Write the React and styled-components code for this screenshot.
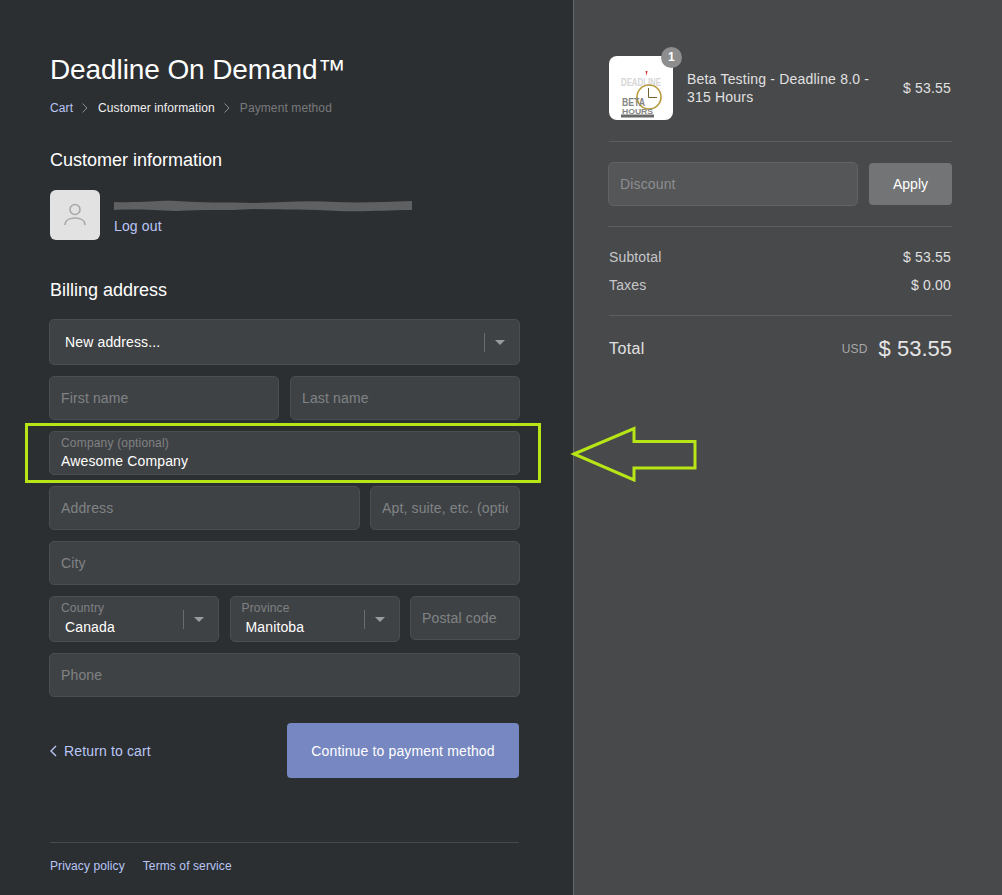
import React from "react";
import styled, { createGlobalStyle } from "styled-components";

const GlobalStyle = createGlobalStyle`
  html, body {
    margin: 0;
    padding: 0;
    background: #48494b;
  }
  * {
    box-sizing: border-box;
  }
`;

const Page = styled.div`
  display: grid;
  grid-template-columns: 574px 1fr;
  min-height: 895px;
  font-family: "Liberation Sans", Arial, sans-serif;
  font-size: 14px;
  letter-spacing: 0.14px;
  color: #fff;
`;

const Main = styled.main`
  background: #2c2f32;
  border-right: 1px solid #68696b;
  padding: 51px 53px 0 49px;
  display: flex;
  flex-direction: column;
`;

const Title = styled.h1`
  margin: 0 0 0 1px;
  font-size: 28px;
  line-height: 38px;
  font-weight: 400;
  letter-spacing: -0.1px;
`;

const Breadcrumb = styled.nav`
  display: flex;
  align-items: center;
  margin: 11px 0 0 1px;
  font-size: 12px;
  line-height: 16px;
  letter-spacing: 0.1px;
`;

const Crumb = styled.span`
  color: ${(props) => props.color || "#fff"};
`;

const CrumbIcon = styled.svg`
  width: 6px;
  height: 10px;
  margin: 0 10px 0 9px;
  fill: none;
  stroke: #8b8c8e;
  stroke-width: 1;
`;

const SectionTitle = styled.h2`
  margin: ${(props) => props.$top} 0 0 1px;
  font-size: 18px;
  line-height: 24px;
  font-weight: 400;
  letter-spacing: 0;
`;

const Account = styled.div`
  display: flex;
  gap: 14px;
  margin: 18px 0 0 1px;
`;

const Avatar = styled.div`
  width: 50px;
  height: 50px;
  border-radius: 6px;
  background: #e2e2e2;
  display: flex;
  align-items: center;
  justify-content: center;
`;

const AccountText = styled.div`
  display: flex;
  flex-direction: column;
`;

const Smudge = styled.svg`
  display: block;
  width: 300px;
  height: 14px;
  margin-top: 9px;
  filter: blur(0.6px);
`;

const LinkText = styled.a`
  color: ${(props) => props.color || "#b9c6f5"};
  font-size: ${(props) => props.size || "14px"};
  line-height: 16px;
  text-decoration: none;
  cursor: pointer;
`;

const LogOut = styled(LinkText)`
  margin-top: 5px;
`;

const Fields = styled.div`
  display: flex;
  flex-direction: column;
  gap: 11px;
  margin-top: 17px;
  width: 471px;
`;

const Row = styled.div`
  display: flex;
  align-items: flex-start;
  justify-content: space-between;
`;

const Field = styled.div`
  flex: ${(props) => (props.$width ? `0 0 ${props.$width}` : "1 1 auto")};
  height: 44px;
  padding: 0 11px;
  display: flex;
  flex-direction: column;
  justify-content: center;
  background: #3f4245;
  border: 1px solid #4b4e51;
  border-radius: 5px;
`;

const FloatLabel = styled.label`
  color: #7f8183;
  font-size: 12px;
  line-height: 13px;
  letter-spacing: 0.18px;
  margin-bottom: 2px;
`;

const Input = styled.input`
  width: 100%;
  padding: 0;
  border: 0;
  outline: 0;
  background: transparent;
  color: #fff;
  font: 14px/17px "Liberation Sans", Arial, sans-serif;
  letter-spacing: 0.14px;

  ${FloatLabel} + & {
    margin-top: 1px;
  }

  &::placeholder {
    color: #808284;
    opacity: 1;
  }
`;

const SelectBox = styled.div`
  flex: ${(props) => (props.$width ? `0 0 ${props.$width}` : "1 1 auto")};
  height: 46px;
  padding: 0 14px 0 11px;
  display: flex;
  align-items: center;
  background: #3f4245;
  border: 1px solid #4b4e51;
  border-radius: 5px;
`;

const SelectText = styled.div`
  flex: 1;
  display: flex;
  flex-direction: column;
`;

const SelectValue = styled.div`
  color: #fff;
  font-size: 14px;
  line-height: 17px;
  padding-left: 4px;

  ${FloatLabel} + & {
    margin-top: 2px;
  }
`;

const SelectDivider = styled.span`
  width: 1px;
  height: 19px;
  background: #6a6c6e;
  margin-right: 10px;
`;

const Caret = styled.svg`
  width: 10px;
  height: 5px;
  fill: #9a9b9d;
`;

const HighlightRow = styled.div`
  position: relative;
  display: flex;
`;

const HighlightBox = styled.div`
  position: absolute;
  top: -8px;
  left: -24px;
  width: 516px;
  height: 60px;
  border: 3px solid #b8e516;
  pointer-events: none;
`;

const Arrow = styled.svg`
  position: absolute;
  top: -7px;
  left: 521px;
  width: 128px;
  height: 58px;
  fill: none;
  stroke: #b8e516;
  stroke-width: 3;
`;

const Actions = styled.div`
  display: flex;
  align-items: center;
  justify-content: space-between;
  margin-top: 26px;
  width: 470px;
`;

const Back = styled(LinkText)`
  display: flex;
  align-items: center;
  gap: 7px;
  margin-left: 1px;
`;

const BackIcon = styled.svg`
  width: 7px;
  height: 12px;
  fill: none;
  stroke: #b9c6f5;
  stroke-width: 1.4;
`;

const PrimaryButton = styled.button`
  width: 232px;
  height: 55px;
  border: 0;
  border-radius: 4px;
  background: #7787c1;
  color: #fff;
  font: 14px "Liberation Sans", Arial, sans-serif;
  letter-spacing: 0.14px;
`;

const Footer = styled.footer`
  display: flex;
  gap: 18px;
  margin: 64px 0 0 1px;
  padding-top: 15px;
  width: 469px;
  border-top: 1px solid #47494c;
  letter-spacing: 0.1px;
`;

const Side = styled.aside`
  background: #48494b;
  padding: 56px 50px 0 35px;
`;

const Item = styled.div`
  display: flex;
  align-items: center;
  padding-bottom: 21px;
  border-bottom: 1px solid #5d5e60;
`;

const Thumb = styled.div`
  position: relative;
  flex: 0 0 64px;
  height: 64px;
  border-radius: 8px;
  background: #fff;
`;

const Badge = styled.span`
  position: absolute;
  top: -9px;
  right: -9px;
  width: 21px;
  height: 21px;
  border-radius: 50%;
  background: #8d8d8d;
  color: #fff;
  font-size: 12px;
  font-weight: 700;
  line-height: 21px;
  text-align: center;
`;

const ItemName = styled.div`
  flex: 1;
  margin-left: 14px;
  padding-right: 20px;
  color: #e0e0e0;
  font-size: 14px;
  line-height: 18px;
  letter-spacing: 0.2px;
`;

const Money = styled.div`
  color: ${(props) => props.color || "#e0e0e0"};
  font-size: 14px;
  line-height: 18px;
  letter-spacing: 0.2px;
  padding-right: 1px;
`;

const Discount = styled.div`
  display: flex;
  align-items: center;
  justify-content: space-between;
  margin-left: -1px;
  padding: 20px 0;
  border-bottom: 1px solid #5d5e60;
`;

const DiscountField = styled.div`
  width: 250px;
  height: 44px;
  padding: 0 11px;
  display: flex;
  align-items: center;
  background: #555658;
  border: 1px solid #616264;
  border-radius: 5px;
`;

const DiscountInput = styled(Input)`
  &::placeholder {
    color: #8d8e90;
  }
`;

const ApplyButton = styled.button`
  width: 83px;
  height: 42px;
  border: 0;
  border-radius: 4px;
  background: #737476;
  color: #fff;
  font: 14px "Liberation Sans", Arial, sans-serif;
`;

const Totals = styled.div`
  display: flex;
  flex-direction: column;
  gap: 10px;
  padding: 21px 0 21px;
  border-bottom: 1px solid #5d5e60;
`;

const TotalRow = styled.div`
  display: flex;
  justify-content: space-between;
  color: #c6c7c9;
  font-size: 14px;
  line-height: 18px;
`;

const GrandRow = styled.div`
  display: flex;
  align-items: center;
  justify-content: space-between;
  margin-top: 18px;
  color: #e0e0e0;
  font-size: 16px;
  letter-spacing: 0.4px;
  line-height: 30px;
`;

const GrandAmount = styled.div`
  display: flex;
  align-items: center;
  gap: 11px;
`;

const Currency = styled.span`
  color: #a6a7a9;
  font-size: 12px;
  letter-spacing: 0.2px;
`;

const GrandPrice = styled.span`
  color: #e6e6e6;
  font-size: 22px;
  letter-spacing: 0;
`;

const ThumbText = styled.text`
  font-family: "Liberation Sans", Arial, sans-serif;
  font-weight: 700;
  letter-spacing: 0;
`;

const CrumbArrow = () => (
  <CrumbIcon viewBox="0 0 6 10">
    <path d="M0.5 0.5 L5 5 L0.5 9.5" />
  </CrumbIcon>
);

const SelectCaret = () => (
  <Caret viewBox="0 0 10 5">
    <path d="M0 0 H10 L5 5 Z" />
  </Caret>
);

const UserIcon = () => (
  <svg width="24" height="26" viewBox="0 0 24 26" fill="none" stroke="#a9a9a9" strokeWidth="1.6">
    <circle cx="12" cy="7.5" r="5" />
    <path d="M2 23 C2 18 7 16 12 16 C17 16 22 18 22 23" />
  </svg>
);

// blurred-out email address in the screenshot
const EmailSmudge = () => (
  <Smudge viewBox="0 0 300 14">
    <path
      d="M0 3 C30 4 45 1 62 2 C90 4 110 3 140 4 C170 3 195 1 222 3 C245 4 270 3 298 2 L298 11 C270 11 255 13 225 12 C195 10 170 11 140 10 C110 12 90 10 62 12 C40 11 20 10 0 11 Z"
      fill="#5e6062"
    />
  </Smudge>
);

const ProductArt = () => (
  <svg width="64" height="64" viewBox="0 0 64 64">
    <path d="M36.5 15 L38.5 15 L37.5 20 Z" fill="#d9363a" />
    <ThumbText x="12" y="30" fontSize="10" fill="#d6d6d6" textLength="40" lengthAdjust="spacingAndGlyphs">DEADLINE</ThumbText>
    <circle cx="40" cy="41" r="12" fill="none" stroke="#b69a3a" strokeWidth="1.6" />
    <path d="M39.5 32 V41.5 H48" fill="none" stroke="#6f6330" strokeWidth="1" />
    <ThumbText x="13" y="50" fontSize="10" fill="#858585" textLength="23" lengthAdjust="spacingAndGlyphs">BETA</ThumbText>
    <ThumbText x="13" y="57.5" fontSize="8" fill="#858585" textLength="31" lengthAdjust="spacingAndGlyphs">HOURS</ThumbText>
    <rect x="12" y="58.5" width="33" height="3" fill="#6a6a6a" />
  </svg>
);

export default function App() {
  return (
    <Page>
      <GlobalStyle />
      <Main>
        <Title>Deadline On Demand™</Title>
        <Breadcrumb>
          <Crumb color="#b9c6f5">Cart</Crumb>
          <CrumbArrow />
          <Crumb color="#f0f0f0">Customer information</Crumb>
          <CrumbArrow />
          <Crumb color="#77797b">Payment method</Crumb>
        </Breadcrumb>

        <SectionTitle $top="32px">Customer information</SectionTitle>
        <Account>
          <Avatar>
            <UserIcon />
          </Avatar>
          <AccountText>
            <EmailSmudge />
            <LogOut>Log out</LogOut>
          </AccountText>
        </Account>

        <SectionTitle $top="38px">Billing address</SectionTitle>
        <Fields>
          <Row>
            <SelectBox>
              <SelectText>
                <SelectValue>New address...</SelectValue>
              </SelectText>
              <SelectDivider />
              <SelectCaret />
            </SelectBox>
          </Row>
          <Row>
            <Field $width="230px">
              <Input placeholder="First name" />
            </Field>
            <Field $width="230px">
              <Input placeholder="Last name" />
            </Field>
          </Row>
          <HighlightRow>
            <Field>
              <FloatLabel>Company (optional)</FloatLabel>
              <Input defaultValue="Awesome Company" />
            </Field>
            <HighlightBox />
            <Arrow viewBox="0 0 128 58">
              <path d="M4 30 L64 4.5 V17.5 H125 V44 H64 V56 Z" />
            </Arrow>
          </HighlightRow>
          <Row>
            <Field $width="311px">
              <Input placeholder="Address" />
            </Field>
            <Field $width="150px">
              <Input placeholder="Apt, suite, etc. (optional)" />
            </Field>
          </Row>
          <Row>
            <Field>
              <Input placeholder="City" />
            </Field>
          </Row>
          <Row>
            <SelectBox $width="170px">
              <SelectText>
                <FloatLabel>Country</FloatLabel>
                <SelectValue>Canada</SelectValue>
              </SelectText>
              <SelectDivider />
              <SelectCaret />
            </SelectBox>
            <SelectBox $width="170px">
              <SelectText>
                <FloatLabel>Province</FloatLabel>
                <SelectValue>Manitoba</SelectValue>
              </SelectText>
              <SelectDivider />
              <SelectCaret />
            </SelectBox>
            <Field $width="110px">
              <Input placeholder="Postal code" />
            </Field>
          </Row>
          <Row>
            <Field>
              <Input placeholder="Phone" />
            </Field>
          </Row>
        </Fields>

        <Actions>
          <Back>
            <BackIcon viewBox="0 0 7 12">
              <path d="M6 1 L1 6 L6 11" />
            </BackIcon>
            Return to cart
          </Back>
          <PrimaryButton>Continue to payment method</PrimaryButton>
        </Actions>

        <Footer>
          <LinkText size="12px">Privacy policy</LinkText>
          <LinkText size="12px">Terms of service</LinkText>
        </Footer>
      </Main>

      <Side>
        <Item>
          <Thumb>
            <ProductArt />
            <Badge>1</Badge>
          </Thumb>
          <ItemName>Beta Testing - Deadline 8.0 - 315 Hours</ItemName>
          <Money>$ 53.55</Money>
        </Item>
        <Discount>
          <DiscountField>
            <DiscountInput placeholder="Discount" />
          </DiscountField>
          <ApplyButton>Apply</ApplyButton>
        </Discount>
        <Totals>
          <TotalRow>
            <span>Subtotal</span>
            <Money>$ 53.55</Money>
          </TotalRow>
          <TotalRow>
            <span>Taxes</span>
            <Money>$ 0.00</Money>
          </TotalRow>
        </Totals>
        <GrandRow>
          <span>Total</span>
          <GrandAmount>
            <Currency>USD</Currency>
            <GrandPrice>$ 53.55</GrandPrice>
          </GrandAmount>
        </GrandRow>
      </Side>
    </Page>
  );
}
